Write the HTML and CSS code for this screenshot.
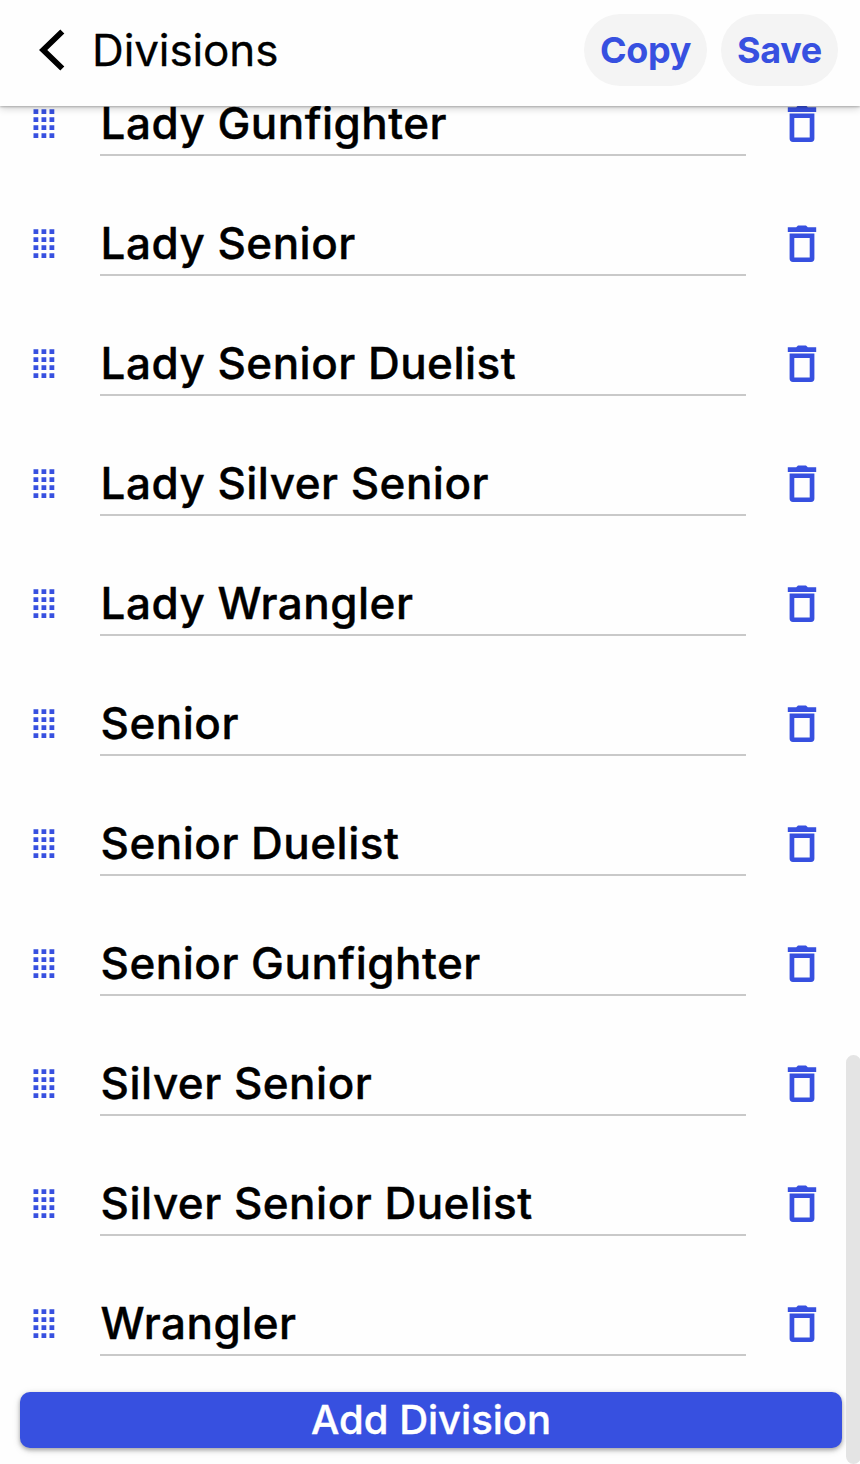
FILE: index.html
```html
<!DOCTYPE html>
<html lang="en">
<head>
  <meta charset="UTF-8">
  <title>Divisions</title>
  <link rel="stylesheet" href="styles.css">
</head>
<body>
  <svg class="sprite" aria-hidden="true">
    <symbol id="drag" viewBox="0 0 24 32">
      <path d="M1.5 1.3h4.8v4.8h-4.8zM9.5 1.3h4.8v4.8h-4.8zM17.5 1.3h4.8v4.8h-4.8zM1.5 9.3h4.8v4.8h-4.8zM9.5 9.3h4.8v4.8h-4.8zM17.5 9.3h4.8v4.8h-4.8zM1.5 17.3h4.8v4.8h-4.8zM9.5 17.3h4.8v4.8h-4.8zM17.5 17.3h4.8v4.8h-4.8zM1.5 25.3h4.8v4.8h-4.8zM9.5 25.3h4.8v4.8h-4.8zM17.5 25.3h4.8v4.8h-4.8z"/>
    </symbol>
    <symbol id="trash" viewBox="0 0 32 40">
      <path d="M1.8 3.2h8.4l1.8-1.7h8l1.8 1.7h8.4v4.7H1.8z"/>
      <path fill-rule="evenodd" d="M3.6 9.4h24.8v25.2q0 3.4-3.4 3.4H7q-3.4 0-3.4-3.4zM8.3 14v19.4h15.4V14z"/>
    </symbol>
  </svg>

  <header class="header">
    <svg class="back" viewBox="0 0 26 42"><path d="M23.3 2.5L4.2 21l19.1 18.5"/></svg>
    <h1>Divisions</h1>
    <button class="pill copy">Copy</button>
    <button class="pill save">Save</button>
  </header>

  <main>
    <ul class="list">
      <li class="row"><svg class="drag"><use href="#drag"/></svg><span class="name">Lady Gunfighter</span><svg class="trash"><use href="#trash"/></svg></li>
      <li class="row"><svg class="drag"><use href="#drag"/></svg><span class="name">Lady Senior</span><svg class="trash"><use href="#trash"/></svg></li>
      <li class="row"><svg class="drag"><use href="#drag"/></svg><span class="name">Lady Senior Duelist</span><svg class="trash"><use href="#trash"/></svg></li>
      <li class="row"><svg class="drag"><use href="#drag"/></svg><span class="name">Lady Silver Senior</span><svg class="trash"><use href="#trash"/></svg></li>
      <li class="row"><svg class="drag"><use href="#drag"/></svg><span class="name">Lady Wrangler</span><svg class="trash"><use href="#trash"/></svg></li>
      <li class="row"><svg class="drag"><use href="#drag"/></svg><span class="name">Senior</span><svg class="trash"><use href="#trash"/></svg></li>
      <li class="row"><svg class="drag"><use href="#drag"/></svg><span class="name">Senior Duelist</span><svg class="trash"><use href="#trash"/></svg></li>
      <li class="row"><svg class="drag"><use href="#drag"/></svg><span class="name">Senior Gunfighter</span><svg class="trash"><use href="#trash"/></svg></li>
      <li class="row"><svg class="drag"><use href="#drag"/></svg><span class="name">Silver Senior</span><svg class="trash"><use href="#trash"/></svg></li>
      <li class="row"><svg class="drag"><use href="#drag"/></svg><span class="name">Silver Senior Duelist</span><svg class="trash"><use href="#trash"/></svg></li>
      <li class="row"><svg class="drag"><use href="#drag"/></svg><span class="name">Wrangler</span><svg class="trash"><use href="#trash"/></svg></li>
    </ul>
    <button class="add">Add Division</button>
  </main>
  <div class="scrollbar"></div>
</body>
</html>
```

FILE: styles.css
```css
* {
  box-sizing: border-box;
}
body {
  margin: 0;
  height: 1464px;
  overflow: hidden;
  position: relative;
  background: #fefefe;
  color: #000;
  font-family: Inter, "Liberation Sans", sans-serif;
}
button {
  border: none;
  font-family: inherit;
  padding: 0;
}
.sprite {
  display: none;
}
.header {
  position: relative;
  z-index: 1;
  display: flex;
  align-items: center;
  height: 106px;
  padding: 0 22px 6px 39px;
  background: #fefefe;
  box-shadow: 0 1px 2px rgba(0,0,0,0.24), 0 2px 8px rgba(0,0,0,0.2);
}
.back {
  width: 26px;
  height: 42px;
  fill: none;
  stroke: #000;
  stroke-width: 5.8;
}
h1 {
  flex: 1;
  margin: 0 0 0 27px;
  font-size: 44px;
  font-weight: 400;
  letter-spacing: -0.1px;
  -webkit-text-stroke: 0.3px #000;
}
.pill {
  height: 72px;
  border-radius: 36px;
  background: #f4f4f4;
  color: #3750e0;
  font-size: 36px;
  font-weight: 700;
  letter-spacing: -0.3px;
}
.copy {
  width: 123px;
  margin-right: 14px;
}
.save {
  width: 117px;
}
.list {
  list-style: none;
  margin: -42px 0 0;
  padding: 0;
}
.row {
  display: flex;
  align-items: center;
  height: 120px;
  padding: 0 42px 0 32px;
}
.drag {
  width: 24px;
  height: 32px;
  fill: #3750e0;
}
.name {
  width: 646px;
  height: 64px;
  margin: 0 40px 0 44px;
  padding-left: 0.6px;
  border-bottom: 2px solid #c9c9c9;
  font-size: 44px;
  font-weight: 500;
  letter-spacing: 0.48px;
  line-height: 62px;
  white-space: nowrap;
  -webkit-text-stroke: 0.4px #000;
}
.trash {
  width: 32px;
  height: 40px;
  fill: #3750e0;
}
.add {
  display: block;
  width: 822px;
  height: 56px;
  margin: 7.5px 0 0 20px;
  border-radius: 10px;
  background: #3750e0;
  color: #fff;
  font-size: 40px;
  font-weight: 500;
  line-height: 56px;
  -webkit-text-stroke: 0.4px #fff;
  box-shadow: 0 2px 4px rgba(0,0,0,0.3), 0 2px 8px rgba(0,0,0,0.12);
}
/* overlays the right edge of the list */
.scrollbar {
  position: absolute;
  top: 1055px;
  right: -1px;
  width: 15px;
  height: 409px;
  border-radius: 8px;
  background: #e4e4e4;
}
```
